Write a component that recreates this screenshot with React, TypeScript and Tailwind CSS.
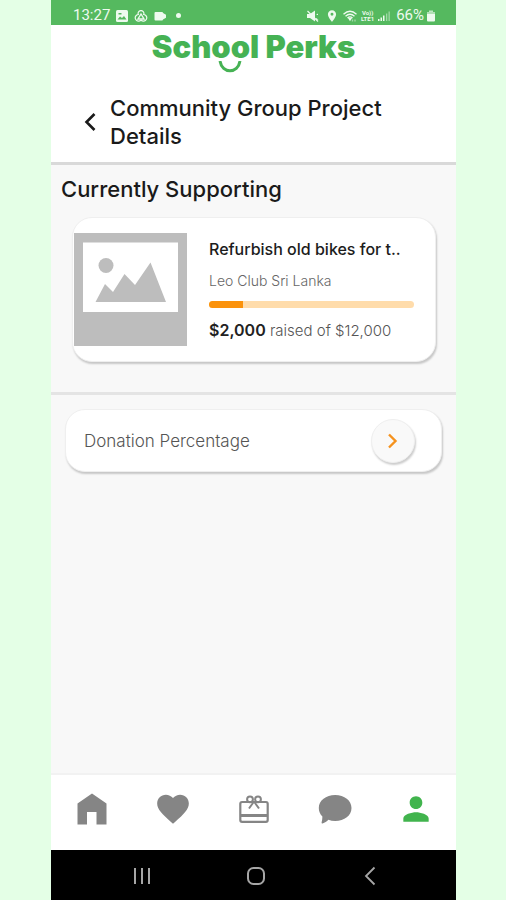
import type { ReactNode } from 'react';
import { MdFavorite, MdPerson, MdLocationOn } from 'react-icons/md';

const project = {
  title: 'Refurbish old bikes for t..',
  organisation: 'Leo Club Sri Lanka',
  raised: 2000,
  goal: 12000,
};

const money = (n: number) => `$${n.toLocaleString('en-US')}`;

function StatusBar() {
  return (
    <div className="flex h-[25px] shrink-0 items-center justify-between bg-[#55b95f] pt-1.5 pr-5 pl-[22px] text-[#eefaef]">
      <div className="flex items-center gap-1.5">
        <span className="font-[Roboto,sans-serif] text-[15px] leading-none">13:27</span>
        {/* Gallery */}
        <svg className="h-3 w-3" viewBox="0 0 12 12">
          <rect width="12" height="12" rx="1.500" fill="currentColor" />
          <path d="M1.500 9.500 4 6.500l2 1.500L8 6l2.500 3.500z" fill="#55b95f" />
          <path d="M2.500 3h3v1.500h-3z" fill="#55b95f" />
        </svg>
        {/* Drive */}
        <svg className="h-3 w-3.5" viewBox="0 0 14 12" fill="none" stroke="currentColor" strokeWidth="1.200">
          <path d="M4.300 4.500a2.900 2.900 0 1 1 5.400 0 3.300 3.300 0 1 1-2.700 5.500 3.300 3.300 0 1 1-2.700-5.500z" />
          <path d="M7 4 4 9h6z" strokeWidth="1.400" />
        </svg>
        {/* Camcorder */}
        <svg className="h-3 w-3" viewBox="0 0 12 12" fill="currentColor">
          <path d="M1.500 2h6.500a1 1 0 0 1 1 1l3 1.800v2.900L9 9.500a1 1 0 0 1-1 1H1.500a1 1 0 0 1-1-1V3a1 1 0 0 1 1-1z" />
        </svg>
        <span className="ml-1 h-[5px] w-[5px] rounded-full bg-current" />
      </div>
      <div className="flex items-center gap-1">
        {/* Muted */}
        <svg className="mr-0.5 h-3 w-3" viewBox="0 0 12 12" fill="currentColor">
          <path d="M0 4h3l5-3.500v11L3 8H0z" />
          <path d="m9 5 2-1.500v1.500zM9 8l2.500 1.500L9 10z" />
          <path d="m.5 1 10.500 10.500" stroke="currentColor" strokeWidth="1.200" />
        </svg>
        <MdLocationOn className="h-3.5 w-3.5" />
        {/* Wi-Fi */}
        <svg className="h-3 w-3.5" viewBox="0 0 14 12" fill="none" stroke="currentColor" strokeWidth="1.3">
          <path d="M.5 4.200Q7-1.800 13.500 4.200M2.500 6.200Q7 2.200 11.500 6.200M4.500 8Q7 5.800 9.500 8" />
          <path d="M6 8.500h2L7 10z" fill="currentColor" />
          <path d="M9.500 9.500v2M12 9.500v2" opacity=".5" />
        </svg>
        <span className="flex flex-col items-center font-[Roboto,sans-serif] text-[6px] leading-[6px] font-bold">
          <span>Vo))</span>
          <span>LTE1</span>
        </span>
        {/* Signal */}
        <svg className="h-3 w-3" viewBox="0 0 12 12" fill="currentColor">
          <path d="M0 9h1.500v2H0zM2.500 7.500H4v3.500H2.500zM5 5.500h1.500V11H5z" />
          <path d="M8 3.500h1.300V11H8zM10.500 1.500h1.300V11h-1.300z" opacity=".5" />
        </svg>
        <span className="flex items-center gap-0.5 pl-0.5">
          <span className="font-[Roboto,sans-serif] text-[15px] leading-none">66%</span>
          <svg className="h-3 w-2.5" viewBox="0 0 10 12" fill="currentColor">
            <path d="M3 .5h4V2H3z" opacity=".7" />
            <path d="M1 2h8v2H1z" opacity=".6" />
            <path d="M1 4h8v6.500a1 1 0 0 1-1 1H2a1 1 0 0 1-1-1z" />
          </svg>
        </span>
      </div>
    </div>
  );
}

function Logo() {
  return (
    <div className="flex flex-col items-center text-[#46b254]">
      <span className="text-[31px] leading-9 font-black">School Perks</span>
      <svg className="-mt-1 mr-12 h-3 w-6" viewBox="0 0 24 12" fill="none" stroke="currentColor" strokeWidth="3">
        <path d="M2 0C4 13 20 13 22 0" />
      </svg>
    </div>
  );
}

function PlaceholderImage() {
  return (
    <svg className="h-[113px] w-[113px] shrink-0" viewBox="0 0 113 113" role="img" aria-label="Project">
      <path d="M0 0h113v113H0z" fill="#bdbdbd" />
      <path d="M9 9.500h95V79H9z" fill="#fff" />
      <circle cx="32" cy="32.500" r="7.500" fill="#bdbdbd" />
      <path d="M21.500 69 31 51l8 8 11.500-18L61 52l15.500-22.500L92 69z" fill="#bdbdbd" />
    </svg>
  );
}

function ProjectCard() {
  const percent = (project.raised / project.goal) * 100;

  return (
    <article className="mr-5 ml-[21px] flex items-center rounded-[20px] border border-[#efefef] bg-white py-[15px] pr-[21px] pl-px shadow-[1px_2px_2px_rgba(0,0,0,0.2)]">
      <PlaceholderImage />
      <div className="ml-[22px] flex min-w-0 flex-1 flex-col">
        <h3 className="text-[16px] leading-6 font-medium whitespace-nowrap text-[#1c1c1c]">{project.title}</h3>
        <p className="mt-2 text-[14px] leading-6 font-light text-[#666]">{project.organisation}</p>
        <div
          className="mt-2 h-[7px] overflow-hidden rounded-full bg-[#ffdcab]"
          role="progressbar"
          aria-label="Amount raised"
          aria-valuenow={project.raised}
          aria-valuemax={project.goal}
        >
          <div className="h-full bg-[#fb920b]" style={{ width: `${percent}%` }} />
        </div>
        <p className="mt-2.5 text-[15px] leading-6 font-light whitespace-nowrap text-[#555]">
          <span className="text-[16px] font-semibold text-[#222]">{money(project.raised)}</span> raised of{' '}
          {money(project.goal)}
        </p>
      </div>
    </article>
  );
}

function NavItem({ label, active, children }: { label: string; active?: boolean; children: ReactNode }) {
  return (
    <a
      href="#"
      aria-label={label}
      aria-current={active ? 'page' : undefined}
      className={`flex flex-1 items-center justify-center ${active ? 'text-[#41b44d]' : 'text-[#858585]'}`}
    >
      {children}
    </a>
  );
}

function BottomNav() {
  return (
    <nav className="flex h-[77px] shrink-0 border-t-2 border-[#f2f2f2] bg-white pb-2">
      <NavItem label="Home">
        <svg className="h-8 w-8" viewBox="0 0 32 32" fill="currentColor">
          <path d="M16 0.500 30.500 10.500V31.500H20.500V19H11V31.500H1.500V10.500z" />
        </svg>
      </NavItem>
      <NavItem label="Favourites">
        <MdFavorite className="h-[38px] w-[38px]" />
      </NavItem>
      <NavItem label="Rewards">
        <svg className="h-7 w-[30px]" viewBox="0 0 30 28" fill="none" stroke="currentColor" strokeWidth="2.200">
          <rect x="1.300" y="7" width="27.400" height="19.800" rx="1.800" />
          <path d="M1.300 20.500h27.400" strokeWidth="3" />
          <circle cx="11" cy="4.300" r="2.900" strokeWidth="2" />
          <circle cx="19" cy="4.300" r="2.900" strokeWidth="2" />
          <path d="M15 6.500 10 13.500M15 6.500l5 7" strokeWidth="2" />
        </svg>
      </NavItem>
      <NavItem label="Messages">
        <svg className="h-[30px] w-[34px]" viewBox="0 0 34 30" fill="currentColor">
          <path d="M17.200 1C26.400 1 33.500 6.500 33.500 14S26.400 27 17.200 27c-2.500 0-4.800-.4-6.800-1.200-1.600 1.700-3.600 2.900-5.900 3.700-.7.200-1-.3-.9-.9.500-2 .8-4 .8-6.100C2 20.200.8 17.300.8 14 .8 6.500 8 1 17.200 1z" />
        </svg>
      </NavItem>
      <NavItem label="Profile" active>
        <MdPerson className="h-[38px] w-[38px]" />
      </NavItem>
    </nav>
  );
}

function SystemNav() {
  return (
    <div className="flex h-[50px] shrink-0 items-center justify-around bg-black pt-0.5 pr-[29px] pl-[34px] text-[#a6a6a6]">
      <button type="button" aria-label="Recent apps">
        <svg className="h-5 w-5" viewBox="0 0 20 20" fill="none" stroke="currentColor" strokeWidth="2">
          <path d="M3 2v16M10 2v16M17 2v16" />
        </svg>
      </button>
      <button type="button" aria-label="Home screen">
        <svg className="h-5 w-5" viewBox="0 0 20 20" fill="none" stroke="currentColor" strokeWidth="2">
          <rect x="2" y="2" width="16" height="16" rx="5.500" />
        </svg>
      </button>
      <button type="button" aria-label="System back">
        <svg className="h-5 w-5" viewBox="0 0 20 20" fill="none" stroke="currentColor" strokeWidth="1.800">
          <path d="M14.500 1.500 6 10l8.500 8.500" />
        </svg>
      </button>
    </div>
  );
}

export default function App() {
  return (
    <div className="flex min-h-screen bg-[#e4ffe6] pr-[50px] pl-[51px] font-[Inter,sans-serif]">
      <div className="flex min-w-0 flex-1 flex-col bg-[#f8f8f8]">
        <StatusBar />
        <header className="border-b-3 border-[#d9d9d9] bg-white pt-1 pb-3">
          <Logo />
          <div className="mt-[21px] flex items-center gap-3 pr-8 pl-[31px]">
            <button type="button" aria-label="Back" className="shrink-0">
              <svg className="h-5 w-4" viewBox="0 0 16 20" fill="none" stroke="#1a1a1a" strokeWidth="2.600">
                <path d="M12.500 2 4.500 10l8 8" />
              </svg>
            </button>
            <h1 className="text-[22px] leading-7 font-medium text-[#1a1a1a]">Community Group Project Details</h1>
          </div>
        </header>

        <main className="flex-1">
          <section className="border-b-3 border-[#e4e4e4] pb-[30px]">
            <h2 className="px-2.5 pt-2.5 pb-3.5 text-[22px] leading-7 font-medium text-[#1a1a1a]">
              Currently Supporting
            </h2>
            <ProjectCard />
          </section>

          <div className="mx-3.5 mt-3.5 flex h-[63px] items-center justify-between rounded-[20px] border border-[#efefef] bg-white pr-[26px] pl-[18px] shadow-[1px_2px_2px_rgba(0,0,0,0.2)]">
            <span id="donation-label" className="text-[17px] leading-6 font-light text-[#555]">
              Donation Percentage
            </span>
            <button
              type="button"
              aria-labelledby="donation-label"
              className="flex h-11 w-11 items-center justify-center rounded-full border border-[#efefef] bg-[#f9f9f9] shadow-[1px_2px_2px_rgba(0,0,0,0.2)]"
            >
              <svg className="h-4 w-3" viewBox="0 0 12 16" fill="none" stroke="#f5921e" strokeWidth="2.400">
                <path d="M2 1.500 8.500 8 2 14.500" />
              </svg>
            </button>
          </div>
        </main>

        <BottomNav />
        <SystemNav />
      </div>
    </div>
  );
}
